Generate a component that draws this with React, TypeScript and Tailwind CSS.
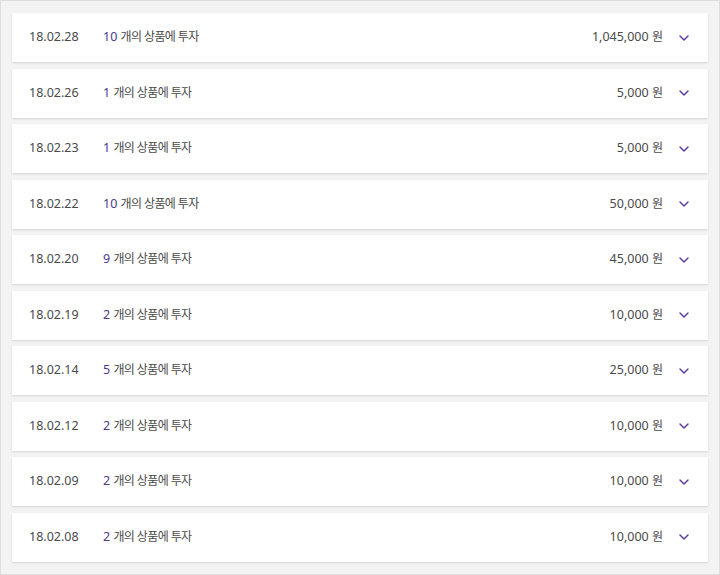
import { ChevronDown } from "lucide-react";

const rows = [
  { date: "18.02.28", count: 10, amount: "1,045,000" },
  { date: "18.02.26", count: 1, amount: "5,000" },
  { date: "18.02.23", count: 1, amount: "5,000" },
  { date: "18.02.22", count: 10, amount: "50,000" },
  { date: "18.02.20", count: 9, amount: "45,000" },
  { date: "18.02.19", count: 2, amount: "10,000" },
  { date: "18.02.14", count: 5, amount: "25,000" },
  { date: "18.02.12", count: 2, amount: "10,000" },
  { date: "18.02.09", count: 2, amount: "10,000" },
  { date: "18.02.08", count: 2, amount: "10,000" },
];

export default function App() {
  return (
    <div
      className="w-[720px] h-[575px] border border-[#dedede] bg-[#f3f3f3] px-[11px] pt-[12px] flex flex-col gap-[6.5px]"
      style={{ fontFamily: '"Noto Sans", "Noto Sans CJK KR", sans-serif' }}
    >
      {rows.map((r) => (
        <div
          key={r.date}
          className="h-[49px] shrink-0 bg-white flex items-center pl-[17px] pr-[16px] text-[12.5px] text-[#4a4a4a] shadow-[0_1px_2px_rgba(0,0,0,0.13)]"
        >
          <span className="w-[74px]">{r.date}</span>
          <span>
            <span className="text-[#4b3a8a]">{r.count}</span>{" "}
            <span className="text-[12px] tracking-[-0.6px]">개의 상품에 투자</span>
          </span>
          <span className="ml-auto">
            {r.amount} <span className="text-[12px]">원</span>
          </span>
          <ChevronDown className="ml-[13px] w-[16px] h-[16px] text-[#5a3ea6]" strokeWidth={2.2} />
        </div>
      ))}
    </div>
  );
}
